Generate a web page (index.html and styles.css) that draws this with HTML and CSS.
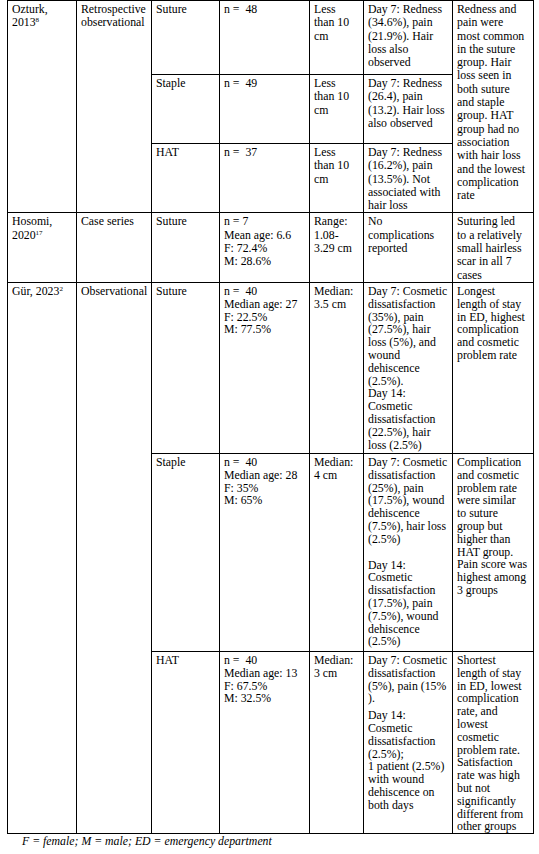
FILE: index.html
```html
<!DOCTYPE html>
<html>
<head>
<meta charset="utf-8">
<link rel="stylesheet" href="styles.css">
</head>
<body>
<table class="tbl">
<colgroup>
<col class="c1"><col class="c2"><col class="c3"><col class="c4"><col class="c5"><col class="c6"><col class="c7">
</colgroup>
<tbody>
<tr class="r1 loose">
<td rowspan="3">Ozturk,<br>2013<sup>8</sup></td>
<td rowspan="3">Retrospective<br>observational</td>
<td>Suture</td>
<td>n =&nbsp; 48</td>
<td>Less<br>than 10<br>cm</td>
<td>Day 7: Redness<br>(34.6%), pain<br>(21.9%). Hair<br>loss also<br>observed</td>
<td rowspan="3">Redness and<br>pain were<br>most common<br>in the suture<br>group. Hair<br>loss seen in<br>both suture<br>and staple<br>group. HAT<br>group had no<br>association<br>with hair loss<br>and the lowest<br>complication<br>rate</td>
</tr>
<tr class="r2 loose">
<td>Staple</td>
<td>n =&nbsp; 49</td>
<td>Less<br>than 10<br>cm</td>
<td>Day 7: Redness<br>(26.4), pain<br>(13.2). Hair loss<br>also observed</td>
</tr>
<tr class="r3 loose">
<td>HAT</td>
<td>n =&nbsp; 37</td>
<td>Less<br>than 10<br>cm</td>
<td>Day 7: Redness<br>(16.2%), pain<br>(13.5%). Not<br>associated with<br>hair loss</td>
</tr>
<tr class="r4 loose">
<td>Hosomi,<br>2020<sup>17</sup></td>
<td>Case series</td>
<td>Suture</td>
<td>n = 7<br>Mean age: 6.6<br>F: 72.4%<br>M: 28.6%</td>
<td>Range:<br>1.08-<br>3.29 cm</td>
<td>No<br>complications<br>reported</td>
<td>Suturing led<br>to a relatively<br>small hairless<br>scar in all 7<br>cases</td>
</tr>
<tr class="r5 tight">
<td rowspan="3">Gür, 2023<sup>2</sup></td>
<td rowspan="3">Observational</td>
<td>Suture</td>
<td>n =&nbsp; 40<br>Median age: 27<br>F: 22.5%<br>M: 77.5%</td>
<td>Median:<br>3.5 cm</td>
<td>Day 7: Cosmetic<br>dissatisfaction<br>(35%), pain<br>(27.5%), hair<br>loss (5%), and<br>wound<br>dehiscence<br>(2.5%).<br>Day 14:<br>Cosmetic<br>dissatisfaction<br>(22.5%), hair<br>loss (2.5%)</td>
<td>Longest<br>length of stay<br>in ED, highest<br>complication<br>and cosmetic<br>problem rate</td>
</tr>
<tr class="r6 tight">
<td>Staple</td>
<td>n =&nbsp; 40<br>Median age: 28<br>F: 35%<br>M: 65%</td>
<td>Median:<br>4 cm</td>
<td><p class="para">Day 7: Cosmetic<br>dissatisfaction<br>(25%), pain<br>(17.5%), wound<br>dehiscence<br>(7.5%), hair loss<br>(2.5%)</p><p class="para">Day 14:<br>Cosmetic<br>dissatisfaction<br>(17.5%), pain<br>(7.5%), wound<br>dehiscence<br>(2.5%)</p></td>
<td>Complication<br>and cosmetic<br>problem rate<br>were similar<br>to suture<br>group but<br>higher than<br>HAT group.<br>Pain score was<br>highest among<br>3 groups</td>
</tr>
<tr class="r7 tight">
<td>HAT</td>
<td>n =&nbsp; 40<br>Median age: 13<br>F: 67.5%<br>M: 32.5%</td>
<td>Median:<br>3 cm</td>
<td><p class="para">Day 7: Cosmetic<br>dissatisfaction<br>(5%), pain (15%<br>).</p><p class="para small-gap">Day 14:<br>Cosmetic<br>dissatisfaction<br>(2.5%);<br>1 patient (2.5%)<br>with wound<br>dehiscence on<br>both days</p></td>
<td>Shortest<br>length of stay<br>in ED, lowest<br>complication<br>rate, and<br>lowest<br>cosmetic<br>problem rate.<br>Satisfaction<br>rate was high<br>but not<br>significantly<br>different from<br>other groups</td>
</tr>
</tbody>
</table>
<p class="note">F = female; M = male; ED = emergency department</p>
</body>
</html>
```

FILE: styles.css
```css
html, body {
  margin: 0;
  padding: 0;
  background: #ffffff;
  color: #000000;
  font-family: "Liberation Serif", "Times New Roman", serif;
  font-size: 11.8px;
}

.tbl {
  border-collapse: collapse;
  table-layout: fixed;
  width: 526px;
  margin-left: 7px;
}

.c1 { width: 69px; }
.c2 { width: 75px; }
.c3 { width: 68px; }
.c4 { width: 90px; }
.c5 { width: 54px; }
.c6 { width: 89px; }
.c7 { width: 81px; }

.tbl td {
  border: 1px solid #000000;
  vertical-align: top;
  padding: 2px 2px 0 4px;
  white-space: nowrap;
  overflow: hidden;
}

.loose td { line-height: 13.3px; }
.tight td { line-height: 12.8px; }

.tbl sup {
  font-size: 7px;
  line-height: 0;
  vertical-align: 4px;
}

.r1 { height: 74px; }
.r2 { height: 69px; }
.r3 { height: 69px; }
.r4 { height: 69px; }
.r5 { height: 171px; }
.r6 { height: 198px; }
.r7 { height: 182px; }

.para {
  margin: 0;
}

.para + .para {
  margin-top: 13px;
}

.para + .small-gap {
  margin-top: 4px;
}

.note {
  margin: 1px 0 0 22px;
  font-style: italic;
  line-height: 13px;
}
```
